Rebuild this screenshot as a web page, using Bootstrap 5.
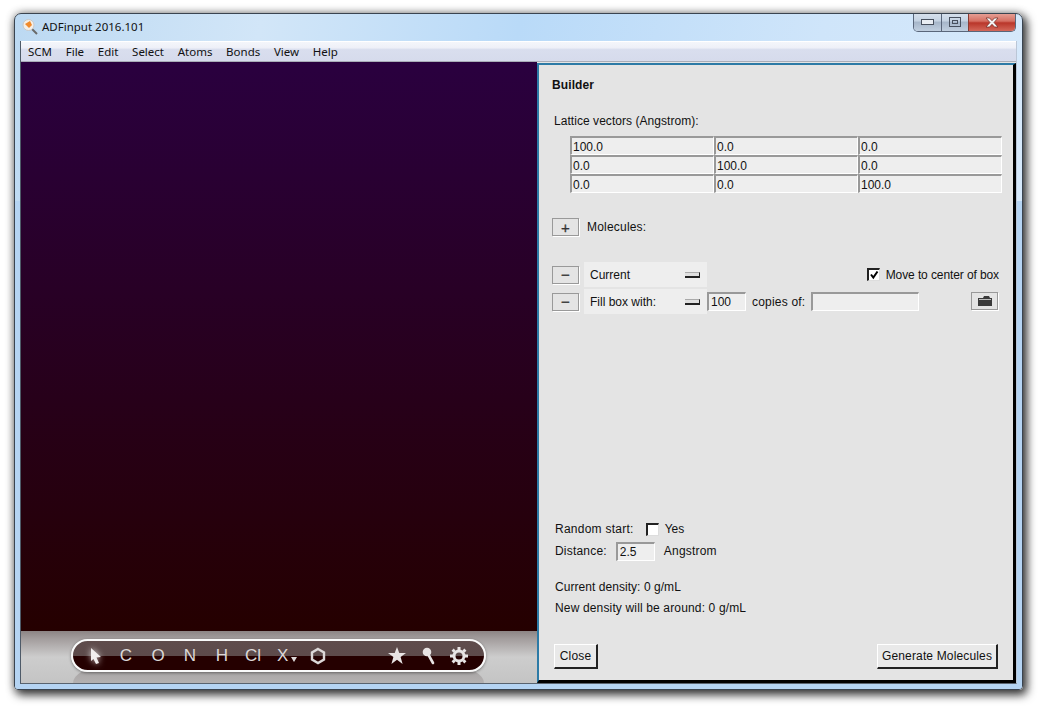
<!DOCTYPE html>
<html lang="en">
<head>
<meta charset="utf-8">
<title>ADFinput 2016.101</title>
<link href="https://cdn.jsdelivr.net/npm/bootstrap@5.3.0/dist/css/bootstrap.min.css" rel="stylesheet">
<style>
html,body{height:100%;margin:0;background:#fff;overflow:hidden}
body{padding:13px 18px 19px 14px;font:12px/1.2 "Liberation Sans",Arial,sans-serif;color:#111}
.aero-win{width:1009px;height:677px;border:1px solid #3a4450;border-radius:7px 7px 4px 4px;box-shadow:3px 4px 10px 1px rgba(0,0,0,.75),0 0 10px rgba(0,0,0,.3);
 background:linear-gradient(100deg,#bcd9f2 0,#d2e6f8 22%,#b9daf8 45%,#cfe5fa 72%,#d9eafb 100%);position:relative;overflow:hidden}
.aero-win::after{content:"";position:absolute;left:0;right:0;top:187px;bottom:0;background:#b5d4f3;z-index:0}
.aero-win>*{position:relative;z-index:1}
.title-strip{height:27px;padding:0 0 2px 7px;font:11.5px "Noto Sans",sans-serif;color:#111}
.title-strip span{margin-left:4px}
.win-btns{position:absolute!important;top:-1px;right:6px;height:19px;width:103px;border:1px solid #59667a;border-top:0;border-radius:0 0 5px 5px;overflow:hidden}
.win-btns>div{height:100%;display:flex;align-items:center;justify-content:center;background:linear-gradient(#d8e2ee 0,#c4d2e2 45%,#a6b6c9 50%,#c0cfe0 100%)}
.wb-a{width:28px;border-right:1px solid #59667a}
.wb-b{width:27px;border-right:1px solid #8a3a30}
.wb-c{flex:1;background:linear-gradient(#e8a49a 0,#d56f62 45%,#b9362a 55%,#d4685a 100%)!important}
.client-box{margin:0 5px;height:643px;border-left:1px solid #4e5a68;border-right:1px solid #bac6d6;border-bottom:1px solid #59636f;background:#e4e4e4}
.menu-strip{height:21px;padding-left:7px;gap:13.7px;font:11.5px "Noto Sans",sans-serif;color:#111;border-top:1px solid #fff;border-bottom:1px solid #a9adb8;
 background:linear-gradient(#f4f6fb 0,#eef0f8 30%,#d9deee 40%,#d6dbec 100%)}
.work-area{height:621px}
.left-pane{width:516px;flex:none}
.viewport{height:569px;background:linear-gradient(#2a003f,#250000)}
.tool-zone{height:52px;background:linear-gradient(#8c8484 0,#a39d9d 15%,#cdcdcd 50%,#c4c4c4 100%);position:relative;overflow:hidden}
.tool-glow{position:absolute;left:52px;width:411px;top:36px;bottom:0;border-radius:30px 30px 0 0/16px 16px 0 0;background:linear-gradient(#a5a1a1,#b4b1b1)}
.tool-pill{position:absolute;left:50px;top:8px;width:415px;height:33px;border:2px solid #fafafa;border-radius:17px;box-shadow:0 1px 3px rgba(0,0,0,.4);
 background:linear-gradient(#5f4c4c 0,#5d4b4b 50%,#250000 52%,#250000 100%);padding-left:7px;color:#dcd8d8;font:17px "Liberation Sans",sans-serif}
.t-cell{width:32px;text-align:center;flex:none;line-height:1}
.t-thin{width:30px}
.t-arrow{width:31px;margin-right:-1px}
.t-arrow svg{filter:drop-shadow(0 0 3px rgba(255,255,255,.8))}
.t-x{width:34px;position:relative;text-align:left;padding-left:9px}
.t-x i{position:absolute;left:23px;top:10px;width:0;height:0;border:3px solid transparent;border-top:5px solid #dcd8d8;border-bottom:0}
.t-gear{width:28px;margin-right:11px}
.t-cell svg{display:block;margin:auto}
.builder{flex:1;border:solid #000;border-width:2px 3px 3px 2px;border-top-color:#2c7aa6;border-left-color:#2c7aa6;background:#e4e4e4;margin-top:1px}
.b-head{font-weight:700;margin:13px 0 0 13px;height:14px;letter-spacing:.1px}
.b-sub{margin:22px 0 0 15px;letter-spacing:.05px}
.lat-grid{margin:8px 0 0 31px;width:432px}
.lat-cell{height:19px!important;min-height:0;padding:2px 0 0 1px;font-size:12px;line-height:14px;color:#111;background:#eee;border-radius:0;border:solid;border-width:2px 1px 1px 2px;border-color:#999 #fff #fff #999}
.lat-cell:focus{box-shadow:none}
.cl-btn{--bs-btn-padding-x:0;--bs-btn-padding-y:0;--bs-btn-font-size:12px;--bs-btn-line-height:1;border-radius:0;background:#e8e8e8;color:#111;height:25px;font:12px "Liberation Sans",sans-serif;letter-spacing:.15px}
.sq-btn{width:27px;height:18px;border:1px solid #999;box-shadow:1px 1px 0 #fff;background:#e4e4e4;display:flex;align-items:center;justify-content:center;font-size:15px;line-height:1;color:#333;-webkit-text-stroke:.3px #333}
.b-row{margin-left:13px}
.drop-box{width:123px;height:25px;background:#eee;padding:0 7px 0 6px;margin-left:5px}
.drop-tick{width:15px;height:6px;background:#e0e0e0;border-top:1px solid #aaa;border-bottom:2px solid #222;border-right:1px solid #222}
.box-in{height:19px!important;min-height:0;padding:0 0 0 2px;font-size:12px;line-height:14px;color:#111;background:#eee;border-radius:0;border:solid;border-width:2px 1px 1px 2px;border-color:#999 #fff #fff #999}
.chk-square{width:13px;height:13px;background:#fff;border:solid;border-color:#222 #ddd #ddd #222;border-width:2px 1px 1px 2px;flex:none;display:block}
.spacer-row{flex:1}
.foot-gap{margin-left:16px}
.add-row{margin-top:25px}
.add-row span{letter-spacing:.2px}
.row-cur{margin-top:26px;height:25px}
.row-fill{margin-top:2px;height:25px}
.mv-lab{margin-left:6px;margin-right:14px;letter-spacing:-.1px}
.w-39{width:39px!important;flex:none}
.w-108{width:108px!important;flex:none}
.cp-lab{margin:0 6px;letter-spacing:.2px}
.fold-btn{margin-right:15px;margin-top:-2px;width:27px}
.rnd-chk{margin-left:12px}
.rnd-row>span:first-child{letter-spacing:.25px}
.ms-6{margin-left:6px}
.ms-9{margin-left:9px;letter-spacing:.2px}
.dist-in{margin-left:9px}
.dist-row>span:first-child{letter-spacing:.2px}
.dist-row{margin-top:6px;height:19px}
.rnd-row{height:14px}
.den-a{margin-top:19px;height:14px;letter-spacing:.05px}
.den-b{margin-top:7px;height:14px;letter-spacing:.15px}
.btn-row{margin:29px 15px 11px 15px}
.act-a{width:44px}
.act-b{width:121px}
.act-a,.act-b{border:solid;border-width:1px 2px 2px 1px;border-color:#fff #222 #222 #fff;background:#e9e9e9}
</style>
</head>
<body>
<div class="aero-win d-flex flex-column">
  <div class="title-strip d-flex align-items-center">
    <svg width="16" height="17" viewBox="0 0 16 17"><line x1="9" y1="10" x2="15" y2="16" stroke="#6a6a6a" stroke-width="2"/><circle cx="6.500" cy="7" r="5.500" fill="#f4efe8" stroke="#c8c8c8"/><path d="M3 6l5-3 2 4-3 3z" fill="#f08a2c"/></svg>
    <span>ADFinput 2016.101</span>
  </div>
  <div class="win-btns d-flex">
    <div class="wb-a"><svg width="13" height="6"><rect x=".5" y=".5" width="12" height="5" fill="#e8edf3" stroke="#47505e"/></svg></div>
    <div class="wb-b"><svg width="12" height="10"><rect x=".5" y=".5" width="11" height="9" fill="none" stroke="#47505e"/><rect x="3.500" y="3.500" width="5" height="3" fill="none" stroke="#47505e"/></svg></div>
    <div class="wb-c"><svg width="14" height="11" viewBox="0 0 14 11"><path d="M1 1h3.500L7 3.700 9.500 1H13L9 5.500 13 10H9.500L7 7.300 4.500 10H1L5 5.500z" fill="#f4f4f4" stroke="#6b2a22" stroke-width=".7"/></svg></div>
  </div>
  <div class="client-box d-flex flex-column">
    <div class="menu-strip d-flex align-items-center">
      <span>SCM</span><span>File</span><span>Edit</span><span>Select</span><span>Atoms</span><span>Bonds</span><span>View</span><span>Help</span>
    </div>
    <div class="work-area d-flex">
      <div class="left-pane">
        <div class="viewport"></div>
        <div class="tool-zone">
          <div class="tool-glow"></div>
          <div class="tool-pill d-flex align-items-center">
            <div class="t-cell t-arrow"><svg width="18" height="20" viewBox="0 0 18 20"><path d="M4 2l10 9-4.500 .5L12 17l-3 1-2.500-5L4 15z" fill="#f2eeee"/></svg></div>
            <div class="t-cell">C</div><div class="t-cell">O</div><div class="t-cell">N</div><div class="t-cell">H</div><div class="t-cell t-thin">Cl</div>
            <div class="t-cell t-x">X<i></i></div>
            <div class="t-cell"><svg width="16" height="18" viewBox="0 0 16 18"><path d="M8 2l6 3.500v7L8 16l-6-3.500v-7z" fill="none" stroke="#dcd8d8" stroke-width="2.400"/></svg></div>
            <div class="flex-grow-1"></div>
            <div class="t-cell"><svg width="18" height="17" viewBox="0 0 18 17"><path d="M9 0l2.300 6H18l-5.400 4 2 7L9 12.800 3.400 17l2-7L0 6h6.700z" fill="#e8e4e4"/></svg></div>
            <div class="t-cell"><svg width="14" height="18" viewBox="0 0 14 18"><circle cx="5" cy="5" r="4.300" fill="#e8e4e4"/><line x1="6" y1="7" x2="11" y2="16" stroke="#e8e4e4" stroke-width="2.600" stroke-linecap="round"/></svg></div>
            <div class="t-cell t-gear"><svg width="18" height="18" viewBox="0 0 18 18"><circle cx="9" cy="9" r="5" fill="none" stroke="#e8e4e4" stroke-width="3"/><g stroke="#e8e4e4" stroke-width="3"><line x1="9" y1="0" x2="9" y2="3"/><line x1="9" y1="15" x2="9" y2="18"/><line x1="0" y1="9" x2="3" y2="9"/><line x1="15" y1="9" x2="18" y2="9"/><line x1="2.600" y1="2.600" x2="4.700" y2="4.700"/><line x1="13.300" y1="13.300" x2="15.400" y2="15.400"/><line x1="2.600" y1="15.400" x2="4.700" y2="13.300"/><line x1="13.300" y1="4.700" x2="15.400" y2="2.600"/></g></svg></div>
          </div>
        </div>
      </div>
      <div class="builder d-flex flex-column">
        <div class="b-head">Builder</div>
        <div class="b-sub">Lattice vectors (Angstrom):</div>
        <div class="lat-grid">
          <div class="row g-0">
            <div class="col-4"><input class="form-control lat-cell" value="100.0"></div>
            <div class="col-4"><input class="form-control lat-cell" value="0.0"></div>
            <div class="col-4"><input class="form-control lat-cell" value="0.0"></div>
          </div>
          <div class="row g-0">
            <div class="col-4"><input class="form-control lat-cell" value="0.0"></div>
            <div class="col-4"><input class="form-control lat-cell" value="100.0"></div>
            <div class="col-4"><input class="form-control lat-cell" value="0.0"></div>
          </div>
          <div class="row g-0">
            <div class="col-4"><input class="form-control lat-cell" value="0.0"></div>
            <div class="col-4"><input class="form-control lat-cell" value="0.0"></div>
            <div class="col-4"><input class="form-control lat-cell" value="100.0"></div>
          </div>
        </div>
        <div class="d-flex align-items-center b-row add-row">
          <button class="btn cl-btn sq-btn">+</button><span class="ms-2">Molecules:</span>
        </div>
        <div class="d-flex align-items-center b-row row-cur">
          <button class="btn cl-btn sq-btn">&#8722;</button>
          <div class="drop-box d-flex align-items-center justify-content-between"><span>Current</span><i class="drop-tick"></i></div>
          <div class="flex-grow-1"></div>
          <svg class="chk-square" viewBox="0 0 10 10"><path d="M2 4.500l2.300 3L8.500 1.500" fill="none" stroke="#000" stroke-width="2"/></svg>
          <span class="mv-lab">Move to center of box</span>
        </div>
        <div class="d-flex align-items-center b-row row-fill">
          <button class="btn cl-btn sq-btn">&#8722;</button>
          <div class="drop-box d-flex align-items-center justify-content-between"><span>Fill box with:</span><i class="drop-tick"></i></div>
          <input class="form-control box-in w-39" value="100">
          <span class="cp-lab">copies of:</span>
          <input class="form-control box-in w-108" value="">
          <div class="flex-grow-1"></div>
          <button class="btn cl-btn sq-btn fold-btn"><svg width="14" height="10" viewBox="0 0 14 10"><path d="M0 2h5l1-2h5l1 2h2v8H0z" fill="#3a3a3a"/><rect x="1" y="3" width="12" height="1" fill="#bbb"/></svg></button>
        </div>
        <div class="spacer-row"></div>
        <div class="d-flex align-items-center foot-gap rnd-row"><span>Random start:</span><svg class="chk-square rnd-chk"></svg><span class="ms-6">Yes</span></div>
        <div class="d-flex align-items-center foot-gap dist-row"><span>Distance:</span><input class="form-control box-in w-39 dist-in" value="2.5"><span class="ms-9">Angstrom</span></div>
        <div class="foot-gap den-a">Current density: 0 g/mL</div>
        <div class="foot-gap den-b">New density will be around: 0 g/mL</div>
        <div class="d-flex justify-content-between btn-row">
          <button class="btn cl-btn act-a">Close</button>
          <button class="btn cl-btn act-b">Generate Molecules</button>
        </div>
      </div>
    </div>
  </div>
</div>
</body>
</html>
